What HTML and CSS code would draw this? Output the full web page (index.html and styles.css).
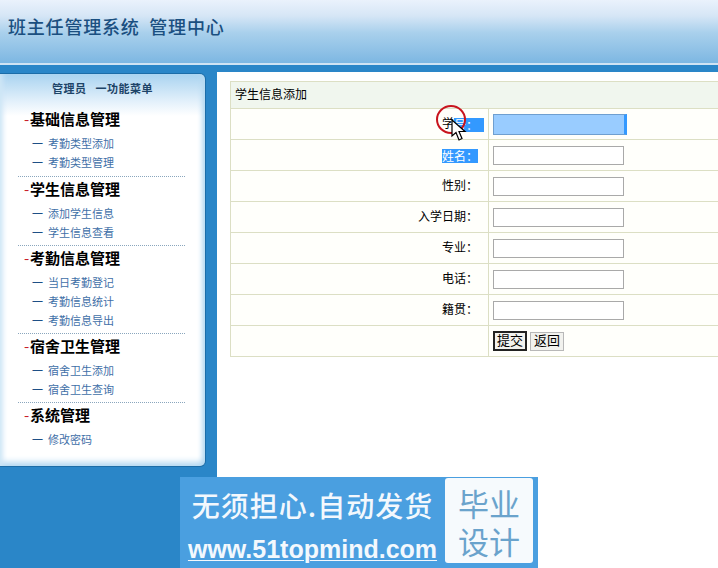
FILE: index.html
```html
<!DOCTYPE html>
<html lang="zh-CN">
<head>
    <meta charset="UTF-8">
    <title>班主任管理系统 管理中心</title>
    <link rel="stylesheet" href="styles.css">
</head>
<body>
    <div class="header">
        <h1>班主任管理系统&nbsp;&nbsp;管理中心</h1>
    </div>
    <div class="content">
        <div class="side">
            <div class="menu">
                <div class="menu-title">管理员&nbsp;&nbsp;&nbsp;一功能菜单</div>
                <div class="group">
                    <h2><span class="dash">-</span>基础信息管理</h2>
                    <a href="#"><span class="bar">一</span>考勤类型添加</a>
                    <a href="#"><span class="bar">一</span>考勤类型管理</a>
                </div>
                <div class="group">
                    <h2><span class="dash">-</span>学生信息管理</h2>
                    <a href="#"><span class="bar">一</span>添加学生信息</a>
                    <a href="#"><span class="bar">一</span>学生信息查看</a>
                </div>
                <div class="group">
                    <h2><span class="dash">-</span>考勤信息管理</h2>
                    <a href="#"><span class="bar">一</span>当日考勤登记</a>
                    <a href="#"><span class="bar">一</span>考勤信息统计</a>
                    <a href="#"><span class="bar">一</span>考勤信息导出</a>
                </div>
                <div class="group">
                    <h2><span class="dash">-</span>宿舍卫生管理</h2>
                    <a href="#"><span class="bar">一</span>宿舍卫生添加</a>
                    <a href="#"><span class="bar">一</span>宿舍卫生查询</a>
                </div>
                <div class="group last">
                    <h2><span class="dash">-</span>系统管理</h2>
                    <a href="#"><span class="bar">一</span>修改密码</a>
                </div>
            </div>
        </div>
        <div class="main">
            <div class="form-title">学生信息添加</div>
            <div class="row">
                <div class="label">学<span class="sel wide">号：</span></div>
                <div class="field"><input class="picked" type="text"></div>
            </div>
            <div class="row">
                <div class="label"><span class="sel">姓名：</span></div>
                <div class="field"><input type="text"></div>
            </div>
            <div class="row">
                <div class="label">性别：</div>
                <div class="field"><input type="text"></div>
            </div>
            <div class="row">
                <div class="label">入学日期：</div>
                <div class="field"><input type="text"></div>
            </div>
            <div class="row">
                <div class="label">专业：</div>
                <div class="field"><input type="text"></div>
            </div>
            <div class="row">
                <div class="label">电话：</div>
                <div class="field"><input type="text"></div>
            </div>
            <div class="row">
                <div class="label">籍贯：</div>
                <div class="field"><input type="text"></div>
            </div>
            <div class="row">
                <div class="label"></div>
                <div class="field">
                    <button class="submit">提交</button>
                    <button>返回</button>
                </div>
            </div>
        </div>
    </div>

    <!-- click marker from the screen recording -->
    <div class="click-ring"></div>
    <svg class="pointer" width="16" height="23" viewBox="0 0 16 23">
        <path d="M1 1 L1 17 L5 13.5 L8 21 L11 19.5 L8 12.5 L14 12.5 Z" fill="#fff" stroke="#000" stroke-width="1.2"/>
    </svg>

    <div class="banner">
        <div class="banner-text">
            <div class="slogan">无须担心.自动发货</div>
            <div class="site">www.51topmind.com</div>
        </div>
        <div class="banner-tag">
            <div>毕业</div>
            <div>设计</div>
        </div>
    </div>
</body>
</html>
```

FILE: styles.css
```css
html, body {
    margin: 0;
    height: 568px;
    overflow: hidden;
}
body {
    position: relative;
    font-family: "Noto Sans CJK SC", "Liberation Sans", sans-serif;
    font-size: 12px;
    color: #000;
    background: #fff;
}
.header {
    height: 65px;
    box-sizing: border-box;
    padding: 14px 0 0 8px;
    background: linear-gradient(#eaf2fc 0%, #d6e6f6 25%, #a9d0ec 52%, #7db7e2 100%);
    border-bottom: 2px solid #cfe3f3;
}
.header h1 {
    margin: 0;
    font-size: 18px;
    line-height: 24px;
    font-weight: 500;
    letter-spacing: 0.8px;
    color: #1a4f80;
}
.content {
    display: flex;
    height: 503px;
}
.side {
    width: 217px;
    flex: none;
    box-sizing: border-box;
    padding-top: 8px;
    background: #2a86c8;
}
.menu {
    width: 206px;
    height: 394px;
    box-sizing: border-box;
    padding-left: 18px;
    border-radius: 0 6px 6px 0;
    border: 1px solid #1c6da8;
    border-left: none;
    background: linear-gradient(#a9d3f0 0, #e4f1fb 28px, #fff 42px);
    box-shadow: inset -5px 0 5px -2px #b5d9f2, inset 6px 0 5px -3px #cfe6f6, inset 0 -8px 6px -4px #b5d9f2;
}
.menu-title {
    height: 34px;
    line-height: 29px;
    margin-left: -18px;
    font-size: 11px;
    font-weight: bold;
    letter-spacing: 0.5px;
    text-align: center;
    color: #1d4468;
}
.group {
    width: 161px;
    padding: 0 0 3px 6px;
    border-bottom: 1px dotted #8aa6bd;
}
.menu-title + .group {
    margin-top: -1px;
    padding-bottom: 4px;
}
.group.last {
    border-bottom: none;
}
.group h2 {
    margin: 0;
    height: 27px;
    font-size: 15px;
    line-height: 24px;
    font-weight: bold;
    white-space: nowrap;
}
.dash {
    display: inline-block;
    width: 6px;
    color: #c8202a;
    font-weight: normal;
}
.group a {
    display: block;
    height: 19px;
    line-height: 19px;
    padding-left: 8px;
    font-size: 11px;
    color: #3f70a8;
    text-decoration: none;
    white-space: nowrap;
}
.bar {
    display: inline-block;
    width: 16px;
    color: #1d4f86;
}
.main {
    flex: 1;
    min-width: 0;
    box-sizing: border-box;
    padding: 9px 0 0 13px;
    background: #fff;
    border-top: 1px solid #2a86c8;
    margin-top: 6px;
    box-shadow: 0 -6px 0 #2a86c8;
}
.form-title {
    height: 28px;
    line-height: 24px;
    padding-left: 4px;
    box-sizing: border-box;
    background: #f0f6ee;
    border: 1px solid #dcdfc4;
    border-right: none;
}
.row {
    display: flex;
    height: 31px;
    box-sizing: border-box;
    border-bottom: 1px solid #dcdfc4;
    border-left: 1px solid #dcdfc4;
    background: #fffffb;
}
.label {
    width: 258px;
    flex: none;
    box-sizing: border-box;
    padding-right: 10px;
    line-height: 28px;
    text-align: right;
    border-right: 1px solid #dcdfc4;
}
.sel {
    display: inline-block;
    height: 14px;
    line-height: 14px;
    vertical-align: middle;
    background: #3399ff;
    color: #fff;
}
.sel.wide {
    padding-right: 6px;
    margin-right: -6px;
}
.field {
    display: flex;
    align-items: flex-start;
    gap: 3px;
    padding: 6px 0 0 4px;
}
.field input {
    display: block;
    width: 131px;
    height: 19px;
    box-sizing: border-box;
    padding: 0;
    background: #fff;
    border: 1px solid #a9a9a9;
}
.field input.picked {
    width: 134px;
    height: 21px;
    margin-top: -1px;
    background: #99ccff;
    border: 1px solid #6f9fd0;
    border-right: 3px solid #3399ff;
}
.field button {
    width: 34px;
    height: 19px;
    padding: 0 0 3px;
    font-family: inherit;
    font-size: 13px;
    line-height: 14px;
    background: #f2f2ee;
    border: 1px solid #b8b8b8;
    border-radius: 0;
    color: #000;
}
.field button.submit {
    height: 20px;
    margin-top: -1px;
    border: 2px solid #222;
}
.click-ring {
    position: absolute;
    left: 436px;
    top: 105px;
    width: 26px;
    height: 25px;
    border: 2px solid #c8141e;
    border-radius: 50%;
}
.pointer {
    position: absolute;
    left: 451px;
    top: 119px;
}
.banner {
    position: absolute;
    left: 180px;
    top: 477px;
    width: 358px;
    height: 91px;
    box-sizing: border-box;
    padding: 1px 5px 5px 0;
    display: flex;
    background: #4a9fe0;
}
.banner-text {
    flex: 1;
    text-align: center;
    white-space: nowrap;
    color: #f3f8fd;
}
.slogan {
    margin-top: 6px;
    height: 42px;
    font-size: 28px;
    line-height: 42px;
    font-weight: 500;
    letter-spacing: 1px;
}
.site {
    margin-top: 9px;
    font-family: "Liberation Sans", sans-serif;
    font-size: 25px;
    line-height: 28px;
    font-weight: bold;
    text-decoration: underline;
    text-decoration-thickness: 1px;
    text-underline-offset: 2px;
}
.banner-tag {
    width: 88px;
    flex: none;
    box-sizing: border-box;
    padding-top: 6px;
    background: #f6fafd;
    border-radius: 3px;
    font-size: 31px;
    line-height: 38px;
    text-align: center;
    color: #6aa3cc;
}
```
